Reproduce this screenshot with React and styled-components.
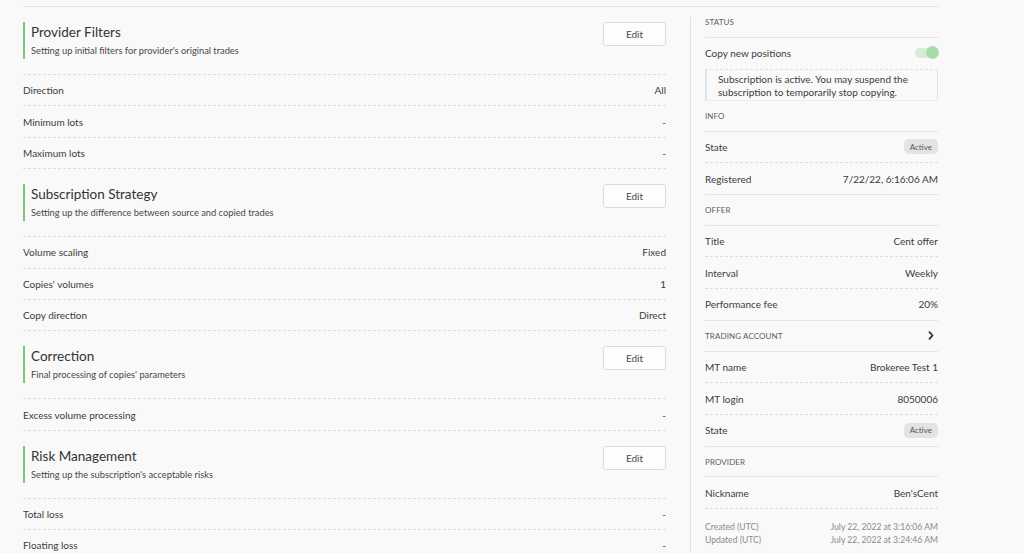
import React from "react";
import styled, { createGlobalStyle } from "styled-components";

const Global = createGlobalStyle`
  html, body { margin: 0; padding: 0; background: #f9f9f9; }
  body { font-family: "Lato", "Noto Sans", sans-serif; color: #3c3c3c; -webkit-font-smoothing: antialiased; }
  * { box-sizing: border-box; }
`;

const Page = styled.div`
  width: 915px;
  margin: 6px 0 0 23px;
  border-top: 1px solid #e4e4e4;
  display: flex;
  align-items: stretch;
`;

const Main = styled.div`
  width: 643px;
  flex: none;
`;

const Divider = styled.div`
  width: 1px;
  flex: none;
  margin: 10px 14px 0 24px;
  background: #e2e2e2;
`;

const Aside = styled.div`
  width: 233px;
  flex: none;
`;

const SectionHead = styled.div`
  display: flex;
  justify-content: space-between;
  align-items: flex-start;
  padding: 15px 0 15px;
  border-bottom: 1px dashed #dedede;
`;

const TitleBlock = styled.div`
  border-left: 2px solid #7cc47e;
  padding-left: 6px;
  height: 37px;
`;

const Title = styled.div`
  font-size: 13.5px;
  line-height: 20px;
  color: #333;
`;

const Subtitle = styled.div`
  font-size: 9.3px;
  line-height: 14px;
  margin-top: 2px;
  color: #474747;
`;

const EditButton = styled.button`
  width: 63px;
  height: 24px;
  border: 1px solid #dcdcdc;
  border-radius: 3px;
  background: #fdfdfd;
  font-family: inherit;
  font-size: 10px;
  color: #4a4a4a;
  padding: 0;
  cursor: pointer;
`;

const Row = styled.div`
  display: flex;
  justify-content: space-between;
  align-items: center;
  height: ${p => p.$h || 31.4}px;
  border-bottom: ${p => (p.$plain ? "none" : p.$solid ? "1px solid #e4e4e4" : "1px dashed #dedede")};
  font-size: 10px;
  color: #3c3c3c;
`;

const Value = styled.span`
  color: #3c3c3c;
`;

const GroupLabel = styled.div`
  display: flex;
  justify-content: space-between;
  align-items: center;
  height: 30.8px;
  border-bottom: 1px solid #e4e4e4;
  font-size: 8px;
  letter-spacing: 0.1px;
  text-transform: uppercase;
  color: #5e5e5e;
`;

const Toggle = styled.span`
  position: relative;
  width: 23px;
  height: 10px;
  border-radius: 5px;
  background: #d5edd5;
`;

const Knob = styled.span`
  position: absolute;
  right: -1px;
  top: -2px;
  width: 13px;
  height: 13px;
  border-radius: 50%;
  background: #a7dba9;
`;

const Notice = styled.div`
  height: 32px;
  padding: 3px 11px;
  border-left: 2px solid #dde3ea;
  border-right: 1px solid #dfe4ea;
  border-top: 1px dashed #e0e0e0;
  border-bottom: 1px solid #ececec;
  font-size: 10px;
  line-height: 13px;
  color: #3c3c3c;
`;

const Badge = styled.span`
  display: inline-flex;
  align-items: center;
  height: 15px;
  padding: 0 6px;
  border-radius: 5px;
  background: #e3e3e3;
  font-size: 8px;
  color: #555;
`;

const Meta = styled.div`
  padding-top: 12px;
  display: grid;
  grid-template-columns: 1fr auto;
  font-size: 8.6px;
  line-height: 13px;
  color: #8a8a8a;
`;

const MetaValue = styled.span`
  text-align: right;
`;

const ChevronIcon = styled.svg`
  margin-right: 4px;
`;

const Chevron = () => (
  <ChevronIcon width="6" height="9" viewBox="0 0 6 9">
    <path d="M1.5 1.2 L4.5 4.5 L1.5 7.8" fill="none" stroke="#333" strokeWidth="1.8" strokeLinecap="round" strokeLinejoin="round" />
  </ChevronIcon>
);

const sections = [
  {
    title: "Provider Filters",
    sub: "Setting up initial filters for provider's original trades",
    rows: [["Direction", "All"], ["Minimum lots", "-"], ["Maximum lots", "-"]],
  },
  {
    title: "Subscription Strategy",
    sub: "Setting up the difference between source and copied trades",
    rows: [["Volume scaling", "Fixed"], ["Copies' volumes", "1"], ["Copy direction", "Direct"]],
  },
  {
    title: "Correction",
    sub: "Final processing of copies' parameters",
    rows: [["Excess volume processing", "-"]],
  },
  {
    title: "Risk Management",
    sub: "Setting up the subscription's acceptable risks",
    rows: [["Total loss", "-"], ["Floating loss", "-"]],
  },
];

export default function App() {
  return (
    <>
      <Global />
      <Page>
        <Main>
          {sections.map(s => (
            <div key={s.title}>
              <SectionHead>
                <TitleBlock>
                  <Title>{s.title}</Title>
                  <Subtitle>{s.sub}</Subtitle>
                </TitleBlock>
                <EditButton>Edit</EditButton>
              </SectionHead>
              {s.rows.map(([k, v]) => (
                <Row key={k}>
                  <span>{k}</span>
                  <Value>{v}</Value>
                </Row>
              ))}
            </div>
          ))}
        </Main>
        <Divider />
        <Aside>
          <GroupLabel>Status</GroupLabel>
          <Row $h={31} $plain>
            <span>Copy new positions</span>
            <Toggle><Knob /></Toggle>
          </Row>
          <Notice>Subscription is active. You may suspend the subscription to temporarily stop copying.</Notice>
          <GroupLabel>Info</GroupLabel>
          <Row $h={31.7}>
            <span>State</span>
            <Badge>Active</Badge>
          </Row>
          <Row $h={31.7} $solid>
            <span>Registered</span>
            <Value>7/22/22, 6:16:06 AM</Value>
          </Row>
          <GroupLabel>Offer</GroupLabel>
          <Row $h={31.7}>
            <span>Title</span>
            <Value>Cent offer</Value>
          </Row>
          <Row $h={31.7}>
            <span>Interval</span>
            <Value>Weekly</Value>
          </Row>
          <Row $h={31.7} $solid>
            <span>Performance fee</span>
            <Value>20%</Value>
          </Row>
          <GroupLabel>
            <span>Trading account</span>
            <Chevron />
          </GroupLabel>
          <Row $h={31.7}>
            <span>MT name</span>
            <Value>Brokeree Test 1</Value>
          </Row>
          <Row $h={31.7}>
            <span>MT login</span>
            <Value>8050006</Value>
          </Row>
          <Row $h={31.7} $solid>
            <span>State</span>
            <Badge>Active</Badge>
          </Row>
          <GroupLabel>Provider</GroupLabel>
          <Row $h={31.7}>
            <span>Nickname</span>
            <Value>Ben'sCent</Value>
          </Row>
          <Meta>
            <span>Created (UTC)</span>
            <MetaValue>July 22, 2022 at 3:16:06 AM</MetaValue>
            <span>Updated (UTC)</span>
            <MetaValue>July 22, 2022 at 3:24:46 AM</MetaValue>
          </Meta>
        </Aside>
      </Page>
    </>
  );
}
